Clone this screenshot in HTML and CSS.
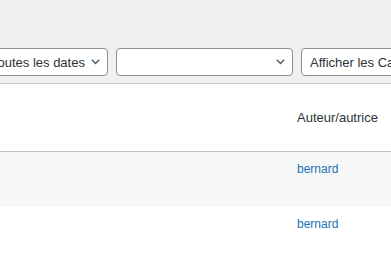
FILE: index.html
```html
<!DOCTYPE html>
<html lang="fr">
<head>
    <meta charset="UTF-8" />
    <title>Articles</title>
    <link rel="stylesheet" href="styles.css">
</head>
<body>
    <div class="tablenav">
        <div class="filters">
            <div class="select select-dates">
                <span>Toutes les dates</span>
                <svg class="chevron" width="9" height="6" viewBox="0 0 9 6"><path d="M0.8 0.8 L4.5 4.6 L8.2 0.8" fill="none" stroke="#50575e" stroke-width="1.4"/></svg>
            </div>
            <div class="select select-empty">
                <span></span>
                <svg class="chevron" width="9" height="6" viewBox="0 0 9 6"><path d="M0.8 0.8 L4.5 4.6 L8.2 0.8" fill="none" stroke="#50575e" stroke-width="1.4"/></svg>
            </div>
            <div class="select select-cats">
                <span>Afficher les Catégories</span>
                <svg class="chevron" width="9" height="6" viewBox="0 0 9 6"><path d="M0.8 0.8 L4.5 4.6 L8.2 0.8" fill="none" stroke="#50575e" stroke-width="1.4"/></svg>
            </div>
        </div>
    </div>
    <table class="posts">
        <thead>
            <tr><th class="col-title"></th><th class="col-author">Auteur/autrice</th></tr>
        </thead>
        <tbody>
            <tr class="alt"><td class="col-title"></td><td class="col-author"><a href="#">bernard</a></td></tr>
            <tr><td class="col-title"></td><td class="col-author"><a href="#">bernard</a></td></tr>
        </tbody>
    </table>
</body>
</html>
```

FILE: styles.css
```css
body {
    font-family: 'Liberation Sans', Arial, sans-serif;
    margin: 0;
    padding: 0;
    background-color: #ffffff;
    color: #2c3338;
    overflow: hidden;
}
.tablenav {
    background-color: #f0f0f1;
    height: 83px;
    padding-top: 48px;
    box-sizing: border-box;
}
.filters {
    display: flex;
    gap: 8px;
    margin-left: -18px;
    white-space: nowrap;
}
.select {
    display: flex;
    align-items: center;
    justify-content: space-between;
    flex-shrink: 0;
    height: 28px;
    box-sizing: border-box;
    padding: 0 7px 0 8px;
    background: #fff;
    border: 1px solid #8c8f94;
    border-radius: 4px;
    font-size: 13px;
    color: #2c3338;
}
.select-dates { width: 126px; }
.select-empty { width: 177px; }
.select-cats { width: 170px; }
.chevron { flex-shrink: 0; margin-left: 5px; }
.posts {
    width: 100%;
    border-collapse: collapse;
    border-top: 1px solid #c3c4c7;
}
.posts th, .posts td {
    padding: 0;
    text-align: left;
    vertical-align: top;
}
.posts thead th {
    height: 67px;
    border-bottom: 1px solid #c3c4c7;
    font-size: 13px;
    font-weight: normal;
    color: #2c3338;
    vertical-align: middle;
}
.col-author { width: 94px; }
.posts tbody td {
    height: 55px;
    font-size: 12px;
    padding-top: 10px;
    box-sizing: border-box;
}
.posts tr.alt td { background: #f6f7f7; }
.posts a {
    color: #2271b1;
    text-decoration: none;
}
```
